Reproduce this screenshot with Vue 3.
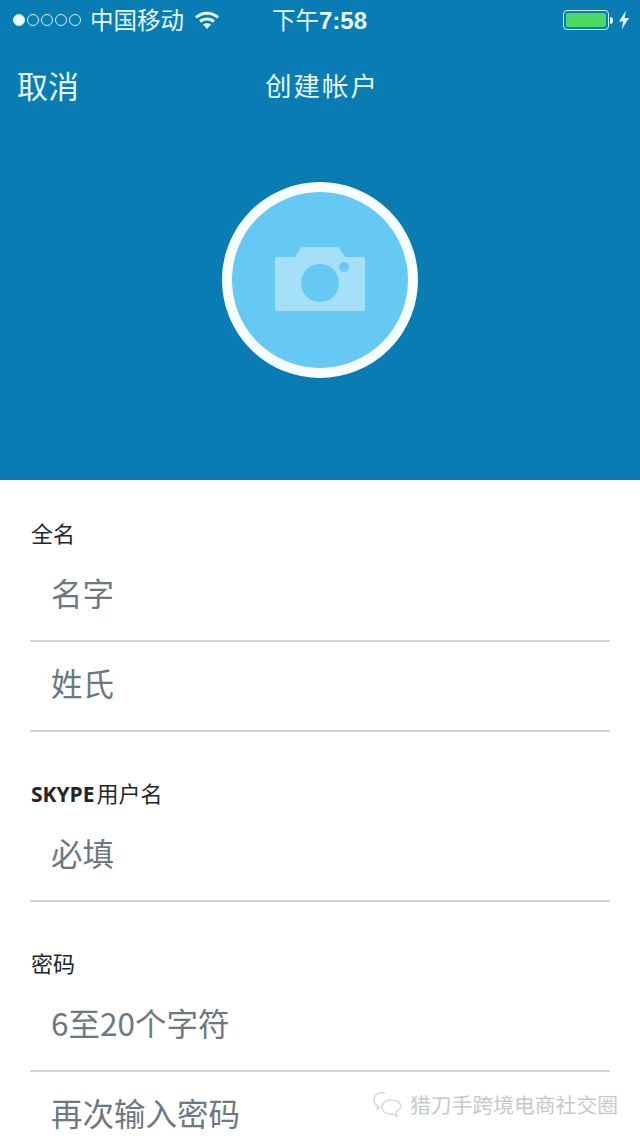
<script setup>
const groups = [
  { label: '全名', rows: ['名字', '姓氏'] },
  { label: '用户名', brand: 'SKYPE', rows: ['必填'] },
  { label: '密码', rows: ['6至20个字符', '再次输入密码'] },
]
</script>

<template>
  <div class="page">
    <header class="hero">
      <div class="status">
        <div class="signal">
          <i class="dot on"></i><i class="dot"></i><i class="dot"></i><i class="dot"></i><i class="dot"></i>
        </div>
        <span class="carrier">中国移动</span>
        <svg class="wifi" width="26" height="20" viewBox="0 0 26 20" fill="none" stroke="#e4f7fc" stroke-width="3">
          <path d="M2 7.500C8 1.800 18 1.800 24 7.500" />
          <path d="M6 11.500C10 8 16 8 20 11.500" />
          <path d="M13 19 L9 14.600C11.300 12.800 14.700 12.800 17 14.600Z" fill="#e4f7fc" stroke="none" />
        </svg>
        <span class="time">下午<b>7:58</b></span>
        <div class="power">
          <div class="battery"><div class="level"></div></div>
          <i class="nub"></i>
          <svg width="12" height="20" viewBox="0 0 12 20"><path d="M8 0.500 L1 11.500 H5.200 L3.600 19.500 L11 8 H6.600Z" fill="#e4f7fc" /></svg>
        </div>
      </div>
      <nav class="nav">
        <span class="cancel">取消</span>
        <span class="title">创建帐户</span>
      </nav>
      <div class="avatar">
        <svg class="camera" width="90" height="64" viewBox="0 0 90 64">
          <path d="M0 12Q0 10 2 10H20L25 2Q26 0 29 0H61Q64 0 65 2L70 10H88Q90 10 90 12V62Q90 64 88 64H2Q0 64 0 62Z" fill="#a5e0f8" />
          <circle cx="45" cy="36" r="19" fill="#66c9f3" />
          <circle cx="69" cy="20" r="5" fill="#66c9f3" />
        </svg>
      </div>
    </header>

    <main class="form">
      <section v-for="g in groups" :key="g.label" class="group">
        <h2 class="label"><b v-if="g.brand">{{ g.brand }}</b>{{ g.label }}</h2>
        <div v-for="r in g.rows" :key="r" class="row">{{ r }}</div>
      </section>
    </main>

    <div class="mark">
      <svg width="32" height="28" viewBox="0 0 32 28" fill="none" stroke="#d6d8da" stroke-width="1.400">
        <path d="M13 3C7 1 2 5 2 10C2 13 4 15 6 16L5 19L9 17" />
        <path d="M20 10C14 9 10 13 10 17C10 22 15 25 20 24L25 26L24 22C27 20 29 18 29 16C29 13 25 10 20 10Z" />
      </svg>
      <span>猎刀手跨境电商社交圈</span>
    </div>
  </div>
</template>

<style scoped>
.page {
  position: relative;
  width: 640px;
  height: 1136px;
  overflow: hidden;
  background: #fff;
  font-family: "Noto Sans CJK SC", "Noto Sans", sans-serif;
}
.hero {
  height: 480px;
  background: #0a7cb4;
  display: flex;
  flex-direction: column;
  align-items: center;
  color: #e4f7fc;
}
.status {
  align-self: stretch;
  height: 40px;
  display: flex;
  align-items: center;
  padding-left: 13px;
}
.signal { display: flex; gap: 2px; width: 68px; }
.dot {
  width: 12px;
  height: 12px;
  box-sizing: border-box;
  border: 1px solid #d5f0f8;
  border-radius: 50%;
}
.dot.on { background: #f2fbfd; }
.carrier { margin-left: 9px; font-size: 23.500px; width: 96px; line-height: 38px; height: 40px; white-space: nowrap; }
.wifi { margin-left: 8px; }
.time { margin-left: 52px; font-size: 23.500px; width: 96px; white-space: nowrap; line-height: 38px; height: 40px; }
.time b { font-family: "Liberation Sans", sans-serif; font-weight: 700; font-size: 24px; }
.power { margin-left: auto; margin-right: 10px; display: flex; align-items: center; }
.battery {
  width: 46px;
  height: 20px;
  box-sizing: border-box;
  border: 1px solid #d2f1f8;
  border-radius: 4px;
  padding: 2px;
}
.level { height: 100%; border-radius: 2px; background: #4cd964; }
.nub { width: 3px; height: 7px; margin-left: 1px; margin-right: 5px; background: #e4f7fc; border-radius: 0 3px 3px 0; }
.nav {
  align-self: stretch;
  height: 54px;
  margin-top: 18px;
  position: relative;
  display: flex;
  align-items: center;
  justify-content: center;
}
.cancel { position: absolute; left: 17px; font-size: 31px; line-height: 54px; }
.title { font-size: 26.500px; letter-spacing: 2px; padding-left: 4px; line-height: 54px; }
.avatar {
  margin-top: 70px;
  width: 196px;
  height: 196px;
  box-sizing: border-box;
  border: 10px solid #f7fdfe;
  border-radius: 50%;
  background: #66c9f3;
  display: flex;
  align-items: center;
  justify-content: center;
}
.camera { margin-bottom: 2px; }
.form { padding: 32px 30px 0; }
.group { margin-bottom: 40px; }
.label {
  margin: 0;
  padding-left: 1px;
  height: 40px;
  font-size: 22px;
  font-weight: 400;
  line-height: 40px;
  color: #22262a;
}
.label b { font-family: "Open Sans", sans-serif; font-weight: 700; font-size: 21px; color: #22262a; margin-right: 2px; }
.row {
  height: 90px;
  box-sizing: border-box;
  line-height: 81px;
  padding-left: 21px;
  border-bottom: 2px solid #ccd5df;
  font-size: 31.500px;
  color: #6d7880;
}
.group:last-child .row:last-child { border-bottom: 0; }
.mark {
  position: absolute;
  right: 22px;
  top: 1090px;
  display: flex;
  align-items: center;
  gap: 6px;
  color: #c6c9cc;
  font-size: 20.800px;
  line-height: 28px;
}
</style>
